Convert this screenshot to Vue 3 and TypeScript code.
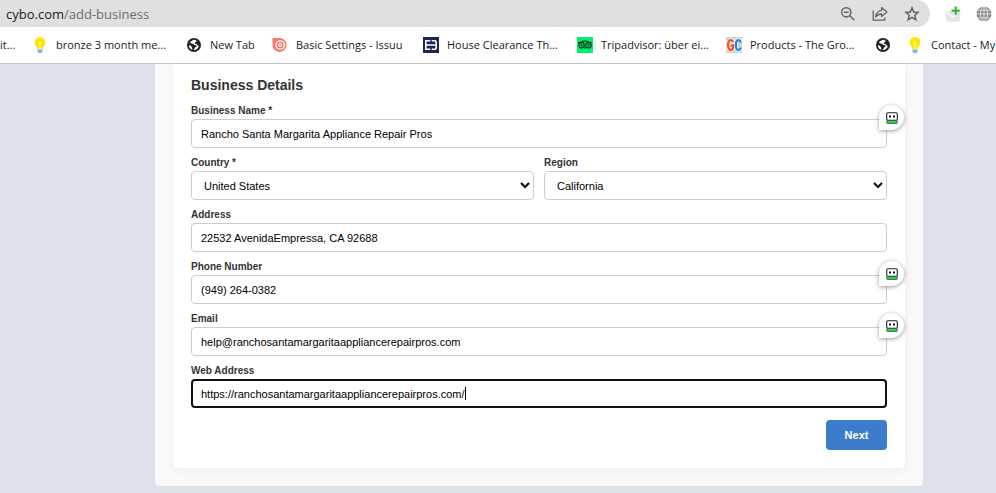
<script setup lang="ts">
import { ref } from 'vue'

type IconName = 'none' | 'bulb' | 'globe' | 'issuu' | 'house' | 'trip' | 'gc'

interface Bookmark {
  icon: IconName
  title: string
  name: string
}

const bookmarks: Bookmark[] = [
  { icon: 'none', title: 'it...', name: 'it...' },
  { icon: 'bulb', title: 'bronze 3 month me...', name: 'bronze 3 month me...' },
  { icon: 'globe', title: 'New Tab', name: 'New Tab' },
  { icon: 'issuu', title: 'Basic Settings - Issuu', name: 'Basic Settings - Issuu' },
  { icon: 'house', title: 'House Clearance Th...', name: 'House Clearance Th...' },
  { icon: 'trip', title: 'Tripadvisor: über ei...', name: 'Tripadvisor: über ei...' },
  { icon: 'gc', title: 'Products - The Gro...', name: 'Products - The Gro...' },
  { icon: 'globe', title: '', name: 'Bookmark' },
  { icon: 'bulb', title: 'Contact - My', name: 'Contact - My' },
]

const businessName = ref('Rancho Santa Margarita Appliance Repair Pros')
const country = ref('United States')
const region = ref('California')
const address = ref('22532 AvenidaEmpressa, CA 92688')
const phone = ref('(949) 264-0382')
const email = ref('help@ranchosantamargaritaappliancerepairpros.com')
const web = ref('https://ranchosantamargaritaappliancerepairpros.com/')
</script>

<template>
  <div class="browser">
    <header class="chrome">
      <div class="toolbar">
        <div class="omnibox">
          <span class="url"><span class="host">cybo.com</span>/add-business</span>
          <button class="tool" type="button" aria-label="Zoom">
            <svg width="16" height="16" viewBox="0 0 16 16" fill="none" stroke="#5f6368" stroke-width="1.5">
              <circle cx="6.3" cy="6.3" r="4.6" />
              <path d="M9.8 9.8 14.3 14.3M4 6.3h4.6" />
            </svg>
          </button>
          <button class="tool" type="button" aria-label="Share">
            <svg width="16" height="16" viewBox="0 0 16 16" fill="none" stroke="#5f6368" stroke-width="1.3">
              <path d="M1.2 4.5v9.6h11.6v-2.6" />
              <path d="M9.6 1.6 14.9 6 9.6 10.400V8C6.8 8 4.900 8.900 3.600 10.900 4.100 7.300 6 4.900 9.600 4.400Z" stroke-linejoin="round" />
            </svg>
          </button>
          <button class="tool" type="button" aria-label="Bookmark this page">
            <svg width="16" height="16" viewBox="0 0 16 16" fill="none" stroke="#5f6368" stroke-width="1.5">
              <path d="M8 1.900 9.700 6l4.400.4-3.300 2.900 1 4.300L8 11.300l-3.800 2.300 1-4.300L1.900 6.400 6.300 6Z" />
            </svg>
          </button>
        </div>
        <button class="tool" type="button" aria-label="Mail extension">
          <svg width="18" height="18" viewBox="0 0 18 18">
            <path d="M1 6h15v10.500H2.500z" fill="#e4e4e4" />
            <path d="M2 6.500 8.500 12l7-5.500" fill="none" stroke="#fafafa" stroke-width="1.500" />
            <path d="M10.500 1.500h2.500v3h3V7h-3v3h-2.500V7h-3V4.500h3z" fill="#3cae3c" stroke="#b9e3b9" stroke-width=".8" />
          </svg>
        </button>
        <button class="tool" type="button" aria-label="Globe extension">
          <svg width="16" height="16" viewBox="0 0 16 16">
            <circle cx="8" cy="8" r="7.500" fill="#8a8a8a" />
            <g fill="none" stroke="#f1f1f1" stroke-width=".8">
              <ellipse cx="8" cy="8" rx="3.600" ry="7.500" />
              <path d="M8 0v16M0 8h16M1.500 4.200h13M1.500 11.800h13" />
            </g>
          </svg>
        </button>
      </div>

      <nav class="bookmarks" aria-label="Bookmarks">
        <a v-for="(b, i) in bookmarks" :key="i" class="bookmark" href="#" :aria-label="b.name">
          <svg v-if="b.icon === 'bulb'" width="16" height="16" viewBox="0 0 16 16">
            <path d="M8 0a5.300 5.300 0 0 0-5.300 5.300c0 2.200 1.400 3.300 2.300 5.200.3.700.4 1.500.6 2h4.800c.2-.5.300-1.300.600-2 .9-1.900 2.300-3 2.300-5.200A5.300 5.300 0 0 0 8 0Z" fill="#ffe600" />
            <path d="M6.500 5 8 6.500 9.500 5M8 6.500V12" fill="none" stroke="#fff6a8" stroke-width="1.300" />
            <path d="M5.500 12.500h5v2L9.500 16h-3l-1-1.500z" fill="#7fb2f5" />
          </svg>
          <svg v-else-if="b.icon === 'globe'" width="16" height="16" viewBox="0 0 16 16">
            <circle cx="8" cy="8" r="7" fill="#202124" />
            <path d="M8.800 2.700C6.800 2.500 6.300 3.800 5 4.200c-1.200.5-1 2 .2 2.200 1.300.2 2.200.1 2.600 1.100.5.900 2.600.2 2.700 1.500.1 1.200-1.500 1.100-1.900 2-.3.800-.4 1.600-1 2.200 2.800.1 5-1.900 5.200-4.400-.9.100-1.400-.3-1.600-1-.2-.8-1.100-.7-1.800-.8-.9-.3-.9-1.300-.1-1.700.8-.4 1.400-.8 1.300-1.400-.5-.7-1.100-1-1.800-1.200Z" fill="#fff" />
            <path d="M2.800 8.400c1.400-.1 2.600.3 2.800 1.300.1.800.7 1 .700 1.800v1.300C4.300 12.200 3 10.500 2.800 8.400Z" fill="#fff" />
          </svg>
          <svg v-else-if="b.icon === 'issuu'" width="16" height="16" viewBox="0 0 16 16">
            <path d="M.5 1h8a7 7 0 1 1-8 7Z" fill="#f9786c" />
            <circle cx="8.200" cy="8" r="4.200" fill="none" stroke="#fff" stroke-width="1.300" />
            <circle cx="8.200" cy="8" r="1.500" fill="none" stroke="#fff" stroke-width="1.200" />
          </svg>
          <svg v-else-if="b.icon === 'house'" width="16" height="16" viewBox="0 0 16 16">
            <path d="M0 0h16v16H0z" fill="#1c2452" />
            <path d="M7.300 3.800H2.800v8.400h4.500M2.800 8h10.400M8.700 3.800h3.500l1 1v6.400l-1 1H8.700" fill="none" stroke="#fff" stroke-width="1.600" />
          </svg>
          <svg v-else-if="b.icon === 'trip'" width="16" height="16" viewBox="0 0 16 16">
            <path d="M0 0h16v16H0z" fill="#00f06b" />
            <path d="M1.200 5.500h2C6 3.900 10 3.900 12.800 5.500h2" fill="none" stroke="#0b3d20" stroke-width="1.200" />
            <g fill="none" stroke="#0b3d20" stroke-width="1.200">
              <circle cx="4.600" cy="8.300" r="2.700" />
              <circle cx="11.400" cy="8.300" r="2.700" />
            </g>
            <path d="M6.700 10.500h2.600L8 12z" fill="#0b3d20" />
            <circle cx="4.600" cy="8.300" r="1.100" fill="#0b3d20" />
            <circle cx="11.400" cy="8.300" r="1.100" fill="#0b3d20" />
          </svg>
          <svg v-else-if="b.icon === 'gc'" width="16" height="16" viewBox="0 0 16 16">
            <path d="M0 0h16v16H0z" fill="#d2d2d2" />
            <g fill="none" stroke="#fff" stroke-width="3.800">
              <path d="M7 5C6.300 2.200 2 2 2 8s4.300 5.800 5 3V8.500H4.800" />
              <path d="M14.800 5.500C14 2 9.800 2 9.800 8s4.200 6 5 2.500" />
            </g>
            <path d="M7 5C6.300 2.200 2 2 2 8s4.300 5.800 5 3V8.500H4.800" fill="none" stroke="#ff4f12" stroke-width="2.300" />
            <path d="M14.800 5.500C14 2 9.800 2 9.800 8s4.200 6 5 2.500" fill="none" stroke="#1589ee" stroke-width="2.300" />
          </svg>
          <span v-if="b.title" class="bookmark-title">{{ b.title }}</span>
        </a>
      </nav>
    </header>

    <main class="panel">
      <form class="card" @submit.prevent>
        <h1 class="title">Business Details</h1>

        <div class="fields">
          <div class="field">
            <label for="business-name">Business Name *</label>
            <div class="control">
              <input id="business-name" v-model="businessName" class="box" type="text" />
              <span class="badge">
                <svg width="12" height="12" viewBox="0 0 12 12">
                  <rect x=".7" y=".7" width="10.600" height="7.600" rx="1.300" fill="#fff" stroke="#222" stroke-width="1.100" />
                  <path d="M3 3.500h2v2H3zM7 3.500h2v2H7z" fill="#111" />
                  <rect x=".7" y="8.500" width="10.600" height="2.900" rx=".8" fill="#2fd15b" stroke="#1f6b35" stroke-width=".9" />
                </svg>
              </span>
            </div>
          </div>

          <div class="pair">
            <div class="field">
              <label for="country">Country *</label>
              <select id="country" v-model="country" class="box">
                <option>United States</option>
              </select>
            </div>
            <div class="field">
              <label for="region">Region</label>
              <select id="region" v-model="region" class="box">
                <option>California</option>
              </select>
            </div>
          </div>

          <div class="field">
            <label for="address">Address</label>
            <input id="address" v-model="address" class="box" type="text" />
          </div>

          <div class="field">
            <label for="phone">Phone Number</label>
            <div class="control">
              <input id="phone" v-model="phone" class="box" type="tel" />
              <span class="badge">
                <svg width="12" height="12" viewBox="0 0 12 12">
                  <rect x=".7" y=".7" width="10.600" height="7.600" rx="1.300" fill="#fff" stroke="#222" stroke-width="1.100" />
                  <path d="M3 3.500h2v2H3zM7 3.500h2v2H7z" fill="#111" />
                  <rect x=".7" y="8.500" width="10.600" height="2.900" rx=".8" fill="#2fd15b" stroke="#1f6b35" stroke-width=".9" />
                </svg>
              </span>
            </div>
          </div>

          <div class="field">
            <label for="email">Email</label>
            <div class="control">
              <input id="email" v-model="email" class="box" type="email" />
              <span class="badge">
                <svg width="12" height="12" viewBox="0 0 12 12">
                  <rect x=".7" y=".7" width="10.600" height="7.600" rx="1.300" fill="#fff" stroke="#222" stroke-width="1.100" />
                  <path d="M3 3.500h2v2H3zM7 3.500h2v2H7z" fill="#111" />
                  <rect x=".7" y="8.500" width="10.600" height="2.900" rx=".8" fill="#2fd15b" stroke="#1f6b35" stroke-width=".9" />
                </svg>
              </span>
            </div>
          </div>

          <div class="field">
            <label for="web">Web Address</label>
            <div class="box active">
              <input id="web" v-model="web" class="inner" type="url" />
              <span class="caret"></span>
            </div>
          </div>
        </div>

        <div class="actions">
          <button class="next" type="submit">Next</button>
        </div>
      </form>
    </main>
  </div>
</template>

<style>
body {
  margin: 0;
  background: #dde1ea;
}
</style>

<style scoped>
.browser {
  font-family: "Liberation Sans", Arial, sans-serif;
  color: #333;
}

.chrome {
  background: #fff;
  border-bottom: 1px solid #c8c8c8;
  font-family: "Open Sans", "Noto Sans", sans-serif;
  overflow: hidden;
}

.toolbar {
  display: flex;
  align-items: center;
  gap: 14px;
  height: 27px;
  padding-right: 4px;
}

.omnibox {
  flex: 1;
  display: flex;
  align-items: center;
  gap: 16px;
  height: 27px;
  padding: 0 10px 0 6px;
  background: #e0e0e0;
  border-radius: 0 14px 14px 0;
}

.url {
  flex: 1;
  font-size: 13px;
  line-height: 18px;
  color: #6b6e72;
}

.host {
  color: #202124;
}

.tool {
  display: flex;
  padding: 0;
  border: 0;
  background: none;
}

.bookmarks {
  display: grid;
  grid-template-columns: 32px 154px 86px 151px 154px 149px 149px 32px auto;
  align-items: center;
  height: 36px;
}

.bookmark {
  display: flex;
  align-items: center;
  gap: 8px;
  color: #202124;
  font-size: 11px;
  line-height: 16px;
  white-space: nowrap;
  text-decoration: none;
}

.bookmark svg {
  flex: none;
}

.panel {
  margin: 0 73px 0 155px;
  padding: 0 18px 18px;
  background: #f9f9f9;
  border-radius: 0 0 4px 4px;
}

.card {
  padding: 12px 18px 18px;
  background: #fff;
  border-radius: 0 0 6px 6px;
  box-shadow: 0 2px 8px rgba(0, 0, 0, 0.06);
}

.title {
  margin: 0 0 11px;
  font-size: 14px;
  line-height: 18px;
}

.fields {
  display: grid;
  gap: 9px;
}

.pair {
  display: grid;
  grid-template-columns: 1fr 1fr;
  gap: 10px;
}

.field {
  display: grid;
  gap: 2px;
}

label {
  font-size: 10px;
  font-weight: bold;
  line-height: 12px;
}

.control {
  position: relative;
  display: grid;
}

.box {
  box-sizing: border-box;
  width: 100%;
  height: 29px;
  margin: 0;
  padding: 0 9px;
  border: 1px solid #ccc;
  border-radius: 4px;
  background-color: #fff;
  color: #000;
  font-family: inherit;
  font-size: 11px;
}

select.box {
  padding: 0 4px 0 8px;
}

.active {
  display: flex;
  align-items: center;
  padding: 0 8px;
  border: 2px solid #101010;
}

.inner {
  field-sizing: content;
  margin: 0;
  padding: 0;
  border: 0;
  outline: 0;
  background: none;
  color: inherit;
  font: inherit;
  caret-color: transparent;
}

.caret {
  width: 1px;
  height: 13px;
  background: #000;
}

.badge {
  position: absolute;
  top: -14px;
  right: -17px;
  display: flex;
  align-items: center;
  justify-content: center;
  width: 25px;
  height: 25px;
  border-radius: 13px 13px 13px 0;
  background: #fff;
  box-shadow: 0 1px 4px rgba(0, 0, 0, 0.4);
}

.actions {
  display: flex;
  justify-content: flex-end;
  margin-top: 12px;
}

.next {
  min-width: 61px;
  height: 30px;
  padding: 0 16px;
  border: 0;
  border-radius: 4px;
  background: #3d7ccb;
  color: #fff;
  font-family: inherit;
  font-size: 11px;
  font-weight: bold;
}
</style>
